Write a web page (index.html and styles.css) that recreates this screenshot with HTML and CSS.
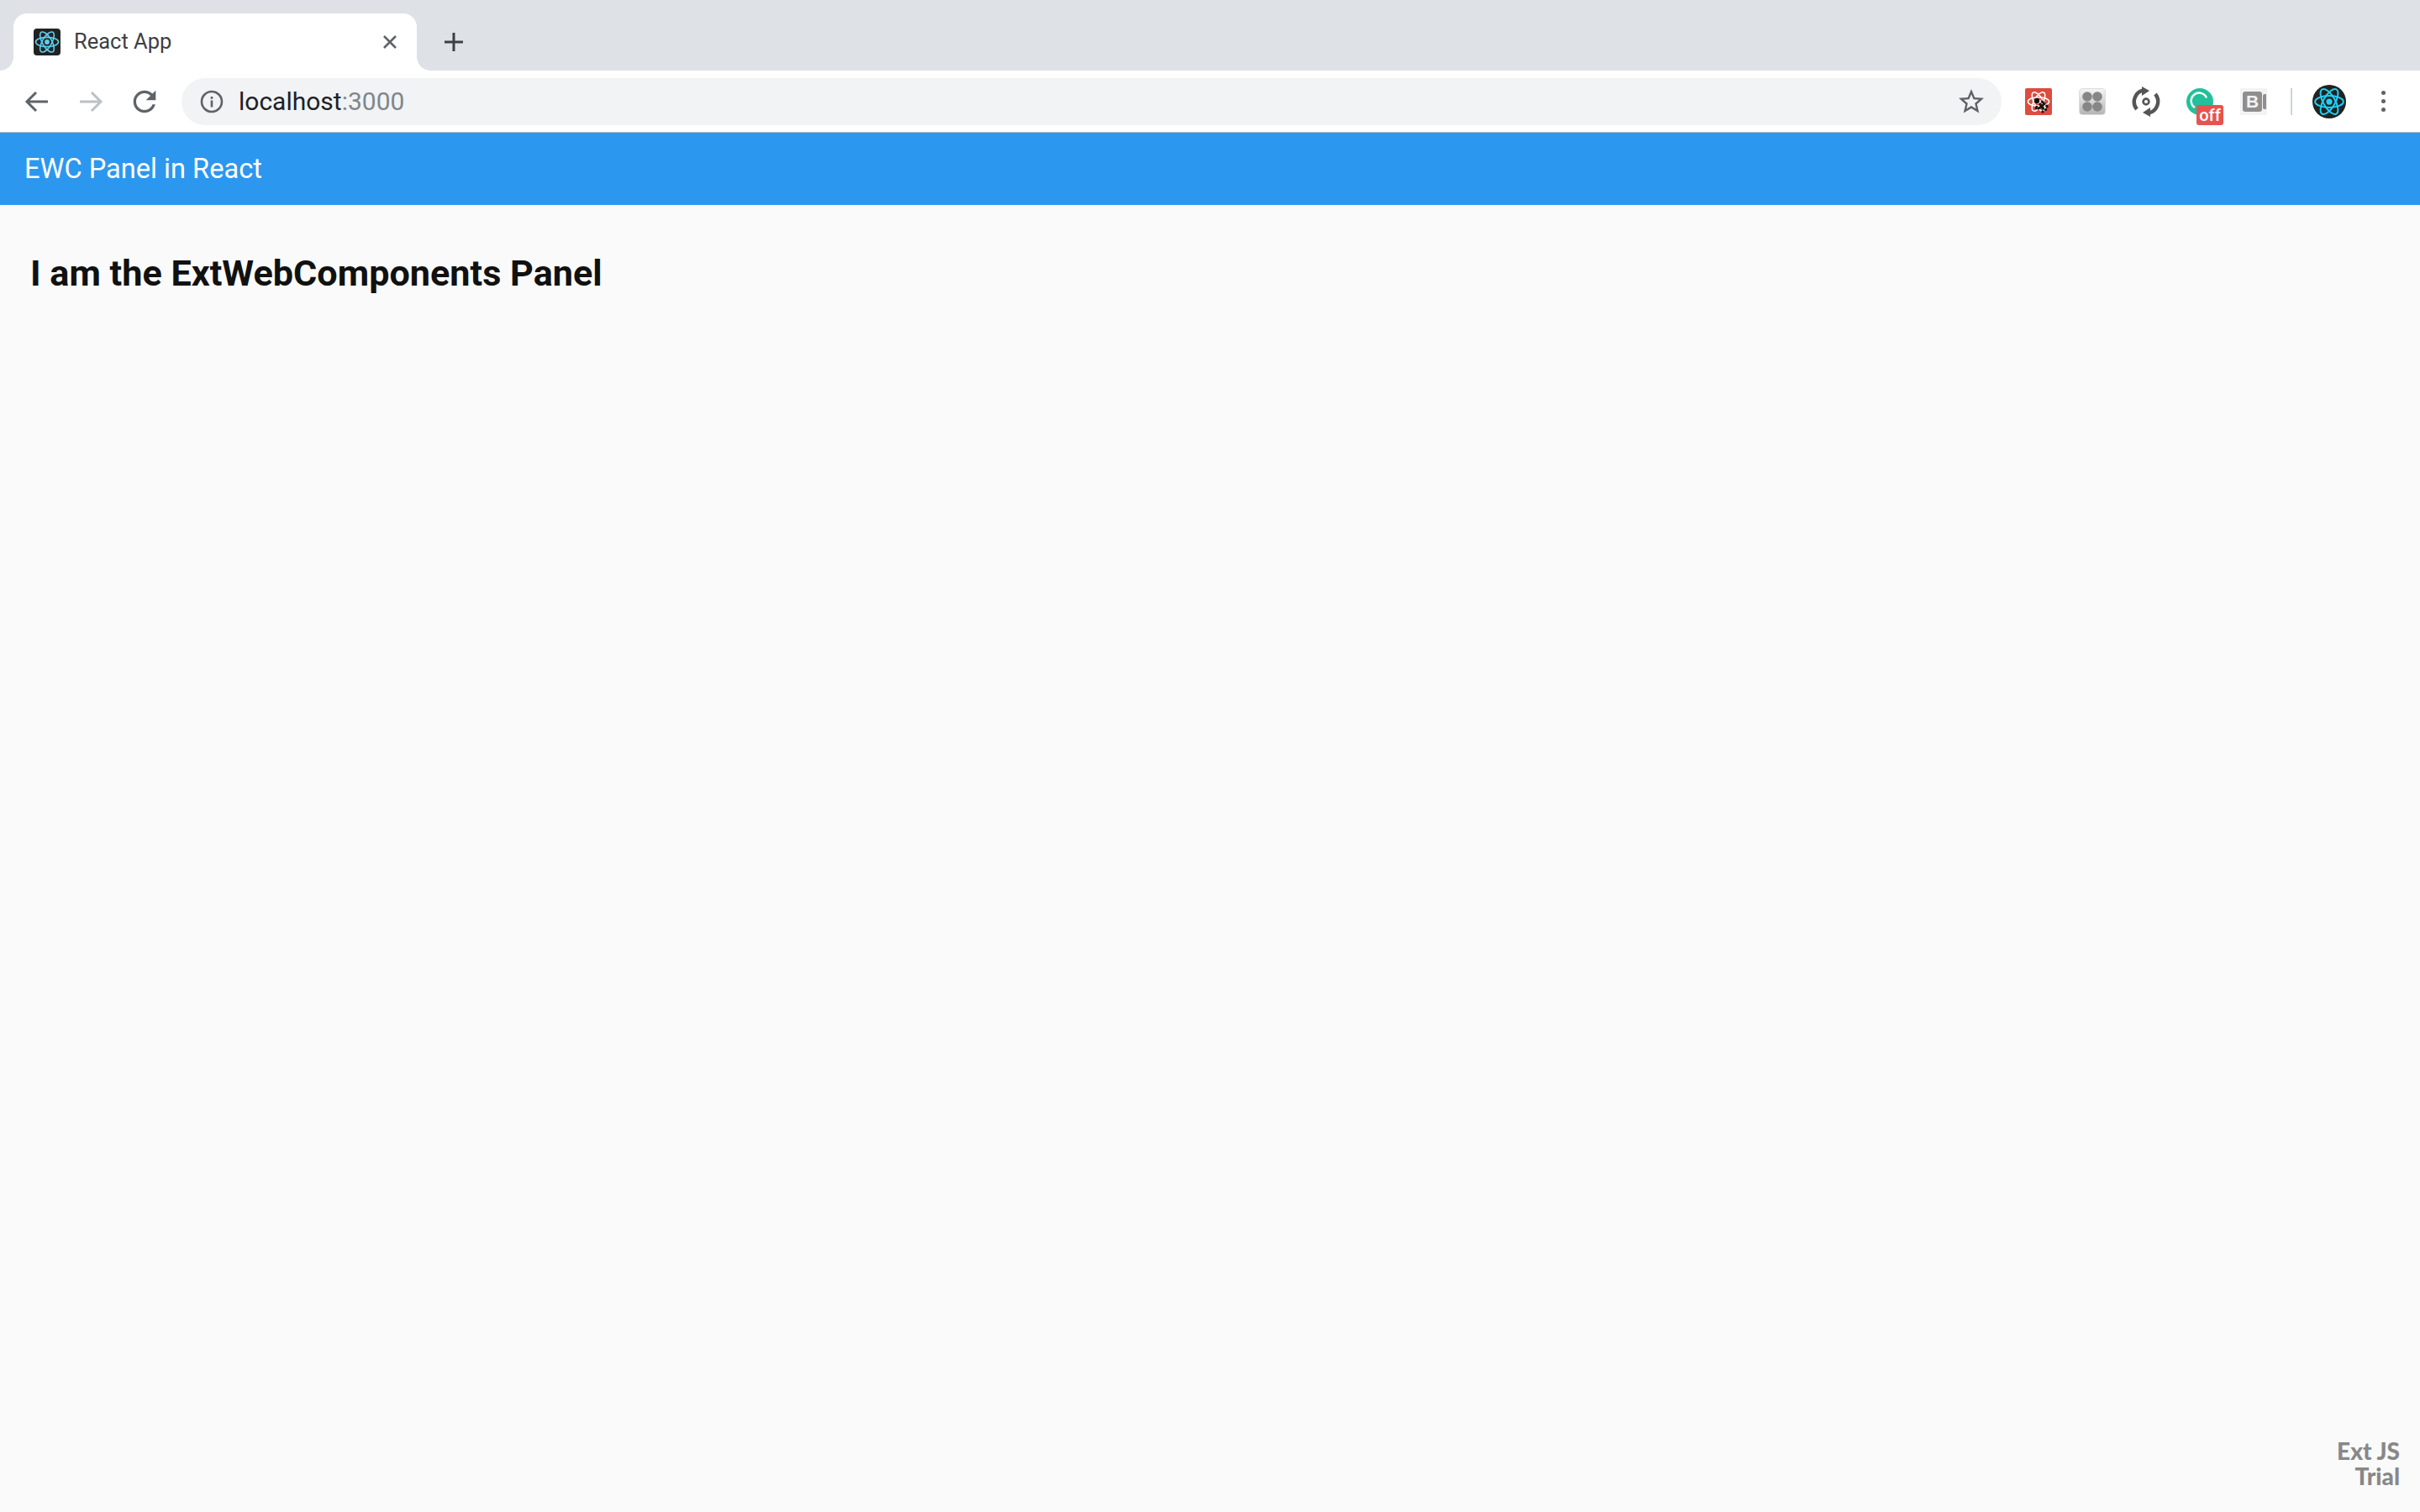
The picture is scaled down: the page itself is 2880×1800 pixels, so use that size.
FILE: index.html
```html
<!DOCTYPE html>
<html lang="en">
<head>
<meta charset="utf-8">
<title>React App</title>
<link rel="stylesheet" href="styles.css">
</head>
<body>
<svg class="defs" width="0" height="0" aria-hidden="true">
  <symbol id="atom" viewBox="0 0 32 32">
    <g fill="none" stroke="currentColor" stroke-width="1.6">
      <ellipse cx="16" cy="16" rx="13.5" ry="5.6"/>
      <ellipse cx="16" cy="16" rx="13.5" ry="5.6" transform="rotate(60 16 16)"/>
      <ellipse cx="16" cy="16" rx="13.5" ry="5.6" transform="rotate(120 16 16)"/>
    </g>
    <circle cx="16" cy="16" r="2.9" fill="currentColor"/>
  </symbol>
</svg>
<div class="browser">
  <div class="tabstrip">
    <div class="tab">
      <span class="favicon"><svg class="atom-icon"><use href="#atom"/></svg></span>
      <span class="tab-title">React App</span>
      <svg class="tab-close" viewBox="0 0 16 16"><path d="M1 1l14 14M15 1L1 15"/></svg>
    </div>
    <svg class="new-tab" viewBox="0 0 24 24"><path d="M12 1v22M1 12h22"/></svg>
  </div>
  <div class="toolbar">
    <div class="nav">
      <span class="nav-btn"><svg class="nav-icon" viewBox="0 0 32 32"><path d="M29 16H5M15 5L4 16l11 11"/></svg></span>
      <span class="nav-btn nav-off"><svg class="nav-icon" viewBox="0 0 32 32"><path d="M3 16h24M17 5l11 11-11 11"/></svg></span>
      <span class="nav-btn"><svg class="reload-icon" viewBox="0 0 24 24"><path d="M17.65 6.35C16.2 4.9 14.21 4 12 4c-4.42 0-7.99 3.58-7.99 8s3.57 8 7.99 8c3.73 0 6.84-2.55 7.73-6h-2.08c-.82 2.33-3.04 4-5.65 4-3.31 0-6-2.69-6-6s2.69-6 6-6c1.66 0 3.14.69 4.22 1.78L13 11h7V4l-2.35 2.35z"/></svg></span>
    </div>
    <div class="omnibox">
      <svg class="info-icon" viewBox="0 0 28 28"><circle cx="14" cy="14" r="12" fill="none" stroke="#5f6368" stroke-width="2.6"/><rect x="12.7" y="12.5" width="2.6" height="8" fill="#5f6368"/><rect x="12.7" y="8" width="2.6" height="2.8" fill="#5f6368"/></svg>
      <span class="url">localhost<span class="url-port">:3000</span></span>
      <svg class="star-icon" viewBox="0 0 24 24"><path d="M22 9.24l-7.19-.62L12 2 9.19 8.63 2 9.24l5.46 4.73L5.82 21 12 17.27 18.18 21l-1.63-7.03L22 9.24zM12 15.4l-3.76 2.27 1-4.28-3.32-2.88 4.38-.38L12 6.1l1.71 4.04 4.38.38-3.32 2.88 1 4.28L12 15.4z"/></svg>
    </div>
    <div class="actions">
      <div class="extensions">
        <span class="ext ext-red">
          <svg class="atom-fill"><use href="#atom"/></svg>
          <svg class="bug" viewBox="0 0 32 32"><circle cx="14" cy="15" r="3.2" fill="#111"/><path d="M17 18l5 7M15 25l9-7M20 15l2 3M25 20l2 3M14 21l-1 4M20 27l2 2M23 26l3-1" stroke="#111" stroke-width="2.6" fill="none"/></svg>
        </span>
        <span class="ext ext-gray">
          <svg viewBox="0 0 30 30"><g fill="#868686"><circle cx="9" cy="9" r="5.8"/><circle cx="21" cy="9" r="5.8"/><circle cx="9" cy="21" r="5.8"/><circle cx="21" cy="21" r="5.8"/></g></svg>
        </span>
        <span class="ext">
          <svg viewBox="0 0 32 32"><g fill="none" stroke="#555" stroke-width="4.4"><path d="M5 25A14 14 0 0 1 13 2.4"/><path d="M27 7a14 14 0 0 1-8 22.6"/></g><path d="M11 -2l9 5-9 6zM21 34l-9-5 9-6z" fill="#555"/><circle cx="16" cy="16" r="3.4" fill="none" stroke="#555" stroke-width="2.6"/></svg>
        </span>
        <span class="ext ext-grammarly">
          <svg viewBox="0 0 32 32"><circle cx="16" cy="16" r="16" fill="#22c09b"/><path d="M24 11.5A9.5 9.5 0 1 0 10 23" fill="none" stroke="#fff" stroke-width="2.4"/></svg>
          <span class="off-badge">off</span>
        </span>
        <span class="ext ext-b">
          <span class="b-box">B</span>
          <span class="b-cam"></span>
        </span>
      </div>
      <span class="divider"></span>
      <span class="avatar"><svg class="atom-avatar"><use href="#atom"/></svg></span>
      <span class="menu-dots"><i></i><i></i><i></i></span>
    </div>
  </div>
</div>
<header class="app-bar">EWC Panel in React</header>
<main class="content">
  <h1 class="panel-title">I am the ExtWebComponents Panel</h1>
</main>
<div class="trial">Ext JS<br>Trial</div>
</body>
</html>
```
FILE: styles.css
```css
* { box-sizing: border-box; }
html, body { margin: 0; height: 100%; }
body {
  width: 2880px;
  height: 1800px;
  overflow: hidden;
  background: #fafafa;
  font-family: Roboto, "Liberation Sans", sans-serif;
  display: flex;
  flex-direction: column;
  position: relative;
}
.defs { position: absolute; }

.browser { flex: none; }
.tabstrip {
  height: 84px;
  background: #dee1e6;
  display: flex;
  align-items: flex-end;
  padding-left: 16px;
}
.tab {
  position: relative;
  width: 480px;
  height: 68px;
  background: #fff;
  border-radius: 16px 16px 0 0;
  display: flex;
  align-items: center;
  padding: 0 24px 0 24px;
}
.tab::before, .tab::after {
  content: "";
  position: absolute;
  bottom: 0;
  width: 16px;
  height: 16px;
}
.tab::before { left: -16px; background: radial-gradient(circle at 0 0, #dee1e6 15.5px, #fff 16px); }
.tab::after { right: -16px; background: radial-gradient(circle at 100% 0, #dee1e6 15.5px, #fff 16px); }
.favicon {
  width: 32px;
  height: 32px;
  border-radius: 4px;
  background: #222;
  color: #5ccfee;
  display: flex;
  flex: none;
}
.atom-icon { width: 32px; height: 32px; }
.tab-title {
  margin: -2px 0 0 16px;
  font-size: 25.5px;
  color: #3c4043;
  flex: 1;
}
.tab-close {
  width: 16px;
  height: 16px;
  fill: none;
  stroke: #5f6368;
  stroke-width: 2.6;
}
.new-tab {
  width: 24px;
  height: 24px;
  margin: 0 0 22px 32px;
  fill: none;
  stroke: #3c4043;
  stroke-width: 3;
}

.toolbar {
  height: 74px;
  background: #fff;
  border-bottom: 1px solid #b8bcc0;
  display: flex;
  align-items: center;
  padding-left: 12px;
}
.nav { display: flex; flex: none; }
.nav-btn {
  width: 64px;
  height: 56px;
  display: flex;
  align-items: center;
  justify-content: center;
  color: #5f6368;
}
.nav-off { color: #bdc0c4; }
.nav-icon {
  width: 32px;
  height: 32px;
  fill: none;
  stroke: currentColor;
  stroke-width: 3;
}
.reload-icon { width: 40px; height: 40px; fill: currentColor; }
.omnibox {
  flex: 1;
  height: 56px;
  margin-left: 12px;
  background: #f1f3f4;
  border-radius: 28px;
  display: flex;
  align-items: center;
  padding: 0 18px 0 22px;
}
.info-icon { width: 28px; height: 28px; flex: none; }
.url {
  margin: -1px 0 0 18px;
  font-size: 30px;
  color: #202124;
  flex: 1;
}
.url-port { color: #80868b; }
.star-icon { width: 36px; height: 36px; fill: #5f6368; flex: none; }

.actions {
  flex: none;
  width: 498px;
  padding-left: 28px;
  display: flex;
  align-items: center;
}
.extensions { display: flex; gap: 32px; }
.ext {
  position: relative;
  width: 32px;
  height: 32px;
  display: block;
  flex: none;
}
.ext > svg { display: block; width: 32px; height: 32px; overflow: visible; }
.ext-red { background: #dc4c3f; border-radius: 2px; color: #fff; }
.ext > .atom-fill { position: absolute; left: 1px; top: 1px; width: 30px; height: 30px; }
.ext > .bug { position: absolute; left: 0; top: 0; }
.ext-gray {
  background: linear-gradient(#f4f4f4, #b5b5b5);
  border-radius: 4px;
  border: 1px solid #ddd;
}
.ext-gray > svg { width: 30px; height: 30px; }
.off-badge {
  position: absolute;
  left: 12px;
  top: 20px;
  width: 32px;
  height: 24px;
  background: #e8534f;
  border-radius: 3px;
  color: #fff;
  font: 500 20px/24px Roboto, sans-serif;
  text-align: center;
}
.ext-b {
  background: #f3f3f3;
  display: flex;
  align-items: center;
  padding-left: 3px;
  gap: 1px;
}
.b-box {
  width: 23px;
  height: 24px;
  background: #8f8f8f;
  border-radius: 3px;
  color: #f3f3f3;
  font: 700 21px/24px "Liberation Sans", sans-serif;
  text-align: center;
}
.b-cam {
  width: 4px;
  height: 18px;
  background: #8f8f8f;
  border-radius: 2px 0 0 2px;
}
.divider {
  width: 2px;
  height: 32px;
  margin-left: 28px;
  background: #d0d2d4;
  flex: none;
}
.avatar {
  width: 40px;
  height: 40px;
  margin-left: 24px;
  border-radius: 50%;
  background: #222;
  color: #1fd0f5;
  display: flex;
  flex: none;
}
.atom-avatar { width: 40px; height: 40px; }
.menu-dots {
  width: 32px;
  margin-left: 28px;
  display: flex;
  flex-direction: column;
  align-items: center;
  gap: 5px;
}
.menu-dots i {
  width: 5px;
  height: 5px;
  border-radius: 50%;
  background: #5f6368;
  display: block;
}

.app-bar {
  flex: none;
  height: 86px;
  background: #2c97ef;
  color: #fff;
  font-size: 32.6px;
  font-weight: 400;
  line-height: 86px;
  padding-left: 29px;
}
.content { flex: 1; padding: 56px 36px; }
.panel-title {
  margin: 0;
  font-size: 43.2px;
  font-weight: 700;
  line-height: 52px;
  color: #111;
}
.trial {
  position: absolute;
  right: 24px;
  bottom: 28px;
  text-align: right;
  font: 900 28px/30px Lato, sans-serif;
  color: #888;
}
```
